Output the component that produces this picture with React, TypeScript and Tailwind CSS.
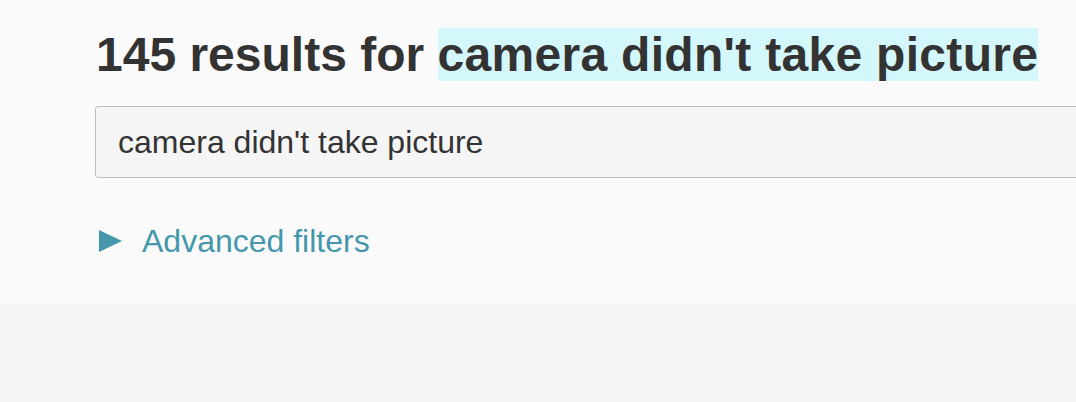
export default function App() {
  return (
    <div
      className="w-screen h-[402px] overflow-hidden bg-[#f5f5f5]"
      style={{ fontFamily: '"Liberation Sans", Arial, sans-serif' }}
    >
      <div className="h-[303px] bg-[#fafafa] pl-[95px] pt-[27px]">
        <h1 className="ml-[1px] text-[48px] leading-[56px] font-bold text-[#333333] whitespace-nowrap">
          145 results for{' '}
          <span className="bg-[#d4f7fb] tracking-[0.3px]">camera didn't take picture</span>
        </h1>

        <input
          type="text"
          readOnly
          defaultValue="camera didn't take picture"
          className="mt-[23px] block w-[1100px] h-[72px] box-border border border-[#bdbdbd] rounded-[3px] bg-[#f5f5f5] pl-[22px] text-[32px] text-[#333333] outline-none"
          style={{ fontFamily: '"Liberation Sans", Arial, sans-serif' }}
        />

        <button className="mt-[43px] flex items-center gap-[20px] text-[32px] leading-[40px] text-[#4598ac] ml-[4px]">
          <svg width="23" height="22" viewBox="0 0 23 22" className="shrink-0">
            <polygon points="0,0 23,11 0,22" fill="#4598ac" />
          </svg>
          <span>Advanced filters</span>
        </button>
      </div>
    </div>
  );
}
